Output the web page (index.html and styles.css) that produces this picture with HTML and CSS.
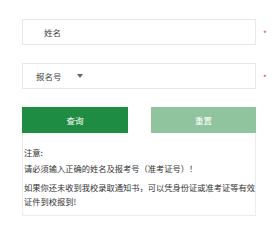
FILE: index.html
```html
<!DOCTYPE html>
<html lang="zh-CN">
  <head>
    <meta charset="UTF-8" />
    <meta name="viewport" content="width=device-width, initial-scale=1.0" />
    <title>录取查询</title>
    <link rel="stylesheet" href="styles.css">
  </head>
  <body>
    <div class="query">
      <div class="field-row">
        <div class="field name-field">姓名</div>
        <span class="required">*</span>
      </div>

      <div class="field-row">
        <div class="field select-field">
          报名号
          <span class="caret"></span>
        </div>
        <span class="required">*</span>
      </div>

      <div class="actions">
        <button class="btn btn-search">查询</button>
        <button class="btn btn-reset">重置</button>
      </div>

      <div class="notice">
        <p class="notice-title">注意:</p>
        <p class="notice-line">请必须输入正确的姓名及报考号（准考证号）！</p>
        <p>如果你还未收到我校录取通知书，可以凭身份证或准考证等有效证件到校报到!</p>
      </div>
    </div>
  </body>
</html>
```

FILE: styles.css
```css
body {
  margin: 0;
  background: #fff;
  font-family: "Noto Sans CJK SC", "Noto Sans", sans-serif;
}

.query {
  width: 234px;
  padding: 19px 0 0 22px;
}

.field-row {
  display: flex;
  align-items: center;
  width: 250px;
  margin-bottom: 18px;
}

.field {
  box-sizing: border-box;
  width: 234px;
  height: 26px;
  border: 1px solid #e8e8e8;
  display: flex;
  align-items: center;
  font-size: 8.5px;
  color: #444;
}

.name-field {
  padding-left: 21px;
}

.select-field {
  padding-left: 13px;
}

.caret {
  width: 0;
  height: 0;
  margin-left: 15px;
  border-left: 3.5px solid transparent;
  border-right: 3.5px solid transparent;
  border-top: 4px solid #666;
}

.required {
  margin-left: 7px;
  margin-top: 3px;
  color: #e03a3a;
  font-size: 8px;
}

.actions {
  display: flex;
  justify-content: space-between;
}

.btn {
  width: 106px;
  height: 26px;
  border: 0;
  padding: 0;
  color: #fff;
  font-family: inherit;
  font-size: 8.5px;
}

.btn-search {
  background: #1f8c43;
}

.btn-reset {
  width: 105px;
  background: #8fc49f;
}

.notice {
  box-sizing: border-box;
  height: 83px;
  padding: 12px 0 0 1px;
  border: 1px solid #ececec;
  border-top: 0;
  font-size: 8.25px;
  line-height: 14px;
  color: #333;
}

.notice p {
  margin: 0 0 5px;
}

.notice .notice-title {
  margin-bottom: 2px;
}
```
